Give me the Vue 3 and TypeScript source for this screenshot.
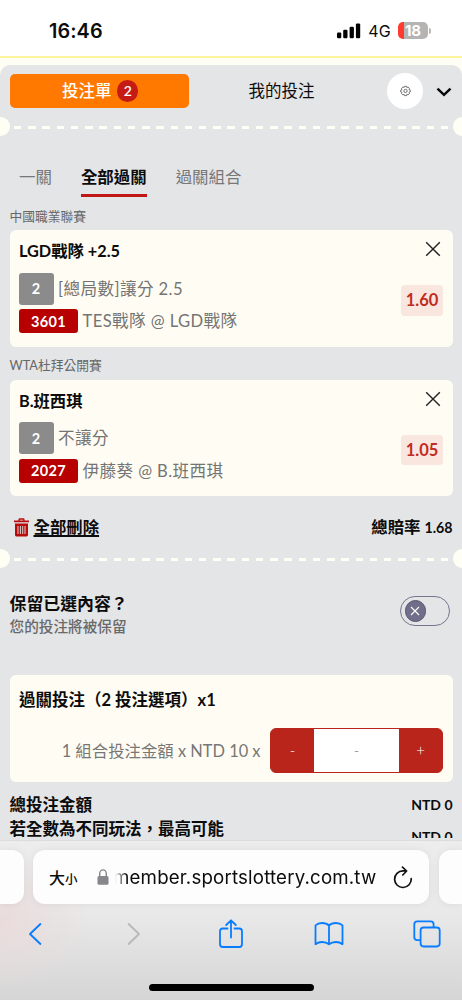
<script setup lang="ts">
interface Bet {
  league: string
  title: string
  level: string
  market: string
  code: string
  match: string
  odds: string
}

const bets: Bet[] = [
  { league: '中國職業聯賽', title: 'LGD戰隊 +2.5', level: '2', market: '[總局數]讓分 2.5', code: '3601', match: 'TES戰隊 @ LGD戰隊', odds: '1.60' },
  { league: 'WTA杜拜公開賽', title: 'B.班西琪', level: '2', market: '不讓分', code: '2027', match: '伊藤葵 @ B.班西琪', odds: '1.05' },
]
</script>

<template>
  <div class="phone">
    <header class="status">
      <span class="time">16:46</span>
      <div class="signals">
        <svg class="bars" width="24" height="16" viewBox="0 0 24 16">
          <rect x="0" y="9.5" width="4.3" height="5.7" rx="1.2" />
          <rect x="6.2" y="6.8" width="4.3" height="8.4" rx="1.2" />
          <rect x="12.6" y="3.7" width="4.3" height="11.5" rx="1.2" />
          <rect x="18.9" y="0.4" width="4.3" height="14.8" rx="1.2" />
        </svg>
        <span class="net">4G</span>
        <div class="battery"><span>18</span></div>
        <i class="cap"></i>
      </div>
    </header>
    <div class="strip"></div>

    <main class="slip">
      <div class="top">
        <button class="active">投注單<span class="count">2</span></button>
        <span class="mine">我的投注</span>
        <span class="gear">
          <svg width="13" height="13" viewBox="0 0 12 12" fill="none" stroke="#555" stroke-width=".75" stroke-linejoin="round">
            <path d="M5.1 1.200h1.800l.35 1.150 1.100-.5 1.300 1.250-.5 1.100 1.250.45v1.700l-1.250.45.5 1.100-1.300 1.250-1.100-.5-.35 1.150H5.100l-.4-1.150-1.100.5-1.300-1.250.5-1.100-1.200-.45v-1.700l1.200-.45-.5-1.100 1.300-1.250 1.100.5z" />
            <circle cx="6" cy="5.500" r="1.500" />
          </svg>
        </span>
        <svg class="chev" width="16" height="10" viewBox="0 0 16 10" fill="none" stroke="#0b0b0b" stroke-width="2.500"><path d="M1.500 1.600 8 7.800l6.500-6.200" /></svg>
      </div>
      <div class="perforation"><i></i><b></b><i></i></div>

      <nav class="tabs">
        <span>一關</span><span class="on">全部過關</span><span>過關組合</span>
      </nav>

      <section v-for="bet in bets" :key="bet.code" class="bet">
        <div class="league">{{ bet.league }}</div>
        <div class="card">
          <div class="info">
            <div class="title">{{ bet.title }}</div>
            <div class="line market"><span class="level">{{ bet.level }}</span><span class="words">{{ bet.market }}</span></div>
            <div class="line match"><span class="code">{{ bet.code }}</span><span class="words">{{ bet.match }}</span></div>
          </div>
          <div class="side">
            <svg width="16" height="16" viewBox="0 0 16 16" fill="none" stroke="#222" stroke-width="1.400"><path d="m1.200 1.200 13.600 13.600M14.800 1.200 1.200 14.800" /></svg>
            <span class="odds">{{ bet.odds }}</span>
          </div>
        </div>
      </section>

      <div class="summary">
        <svg width="15" height="19" viewBox="0 0 15 19" fill="#b80c0c">
          <path d="M0 2.500h4.400V1.700Q4.400.3 5.800.3h3.400q1.400 0 1.400 1.400v.8H15v1.800H0zm5.800 0h3.400v-.8H5.800zM1 5.500h13V17q0 1.400-1.400 1.400H2.400Q1 18.400 1 17z" fill-rule="evenodd" />
          <path d="M4 8v8M6.400 8v8M8.700 8v8M11 8v8" stroke="#e4e5e7" stroke-width=".9" />
        </svg>
        <span class="clear">全部刪除</span>
        <span class="total-odds">總賠率 <em>1.68</em></span>
      </div>
      <div class="perforation"><i></i><b></b><i></i></div>

      <div class="keep">
        <div>
          <div class="keep-title">保留已選內容？</div>
          <div class="keep-note">您的投注將被保留</div>
        </div>
        <div class="toggle"><span>
          <svg width="10" height="10" viewBox="0 0 10 10" stroke="#fff" stroke-width="1.100"><path d="m1 1 8 8M9 1 1 9" /></svg>
        </span></div>
      </div>

      <div class="stake">
        <div class="stake-title">過關投注（2 投注選項）x1</div>
        <div class="stake-row">
          <span class="stake-label">1 組合投注金額 x NTD 10 x</span>
          <div class="stepper"><span>-</span><span class="value">-</span><span>+</span></div>
        </div>
      </div>

      <div class="totals">
        <div><span>總投注金額</span><span class="money">NTD 0</span></div>
        <div><span>若全數為不同玩法，最高可能</span><span class="money late">NTD 0</span></div>
      </div>
    </main>

    <footer class="browser">
      <div class="urls">
        <div class="tab left"></div>
        <div class="address">
          <span class="size">大<small>小</small></span>
          <svg class="lock" width="12" height="16" viewBox="0 0 12 16"><path d="M2.700 8V4.500a3.300 3.600 0 0 1 6.600 0V8" fill="none" stroke="#86868b" stroke-width="1.400" /><rect x=".5" y="7" width="11" height="8.700" rx="1.500" fill="#86868b" /></svg>
          <span class="url">member.sportslottery.com.tw</span>
          <svg class="reload" width="20" height="23" viewBox="0 0 20 23" fill="none" stroke="#111" stroke-width="1.700" stroke-linecap="round" stroke-linejoin="round"><path d="M18.200 12.700A8.300 8.300 0 1 1 9.900 4.900h3.500M9.500 1.200l4.100 3.800-3.800 4" /></svg>
        </div>
        <div class="tab right"></div>
      </div>
      <div class="tools">
        <svg width="14" height="24" viewBox="0 0 14 24"><path d="M12.400 2 2 12l10.400 10" /></svg>
        <svg class="off" width="14" height="24" viewBox="0 0 14 24"><path d="m1.600 2 10.400 10L1.600 22" /></svg>
        <svg width="26" height="32" viewBox="0 0 26 32"><path d="M9.500 10.500H4.700Q2 10.500 2 13.200v13.100Q2 29 4.700 29h16.600q2.700 0 2.700-2.700V13.200q0-2.700-2.700-2.700h-4.800M13 19.500V2.500M8.200 7 13 2.300 17.800 7" /></svg>
        <svg width="30" height="26" viewBox="0 0 30 26"><path d="M15 4.500Q12.500 2 8 2 4 2 1.500 4.300V23.200Q4.500 21 8 21q4.500 0 7 2.300 2.500-2.300 7-2.300 3.500 0 6.500 2.200V4.300Q26 2 22 2q-4.500 0-7 2.500zV23.300" /></svg>
        <svg width="28" height="28" viewBox="0 0 28 28"><path d="M7.500 20.200H4.200q-2.900 0-2.900-2.900V4.200q0-2.900 2.900-2.900h13.500q2.900 0 2.900 2.900v3.200M10.500 7.500h13.300q2.900 0 2.900 2.900v13.200q0 2.900-2.900 2.900H10.500q-2.900 0-2.900-2.900V10.400q0-2.900 2.900-2.900z" /></svg>
      </div>
      <div class="home"></div>
    </footer>
  </div>
</template>

<style>
body { margin: 0; background: #fffef5; }
</style>

<style scoped>
* { box-sizing: border-box; }
.phone { width: 462px; height: 1000px; overflow: hidden; background: #fffef5; display: flex; flex-direction: column; font-family: Lato, "Noto Sans CJK TC", sans-serif; color: #0c0c0c; white-space: nowrap; }
.status { height: 56px; flex: none; background: #fff; display: flex; justify-content: space-between; padding: 0 31px 0 49px; font-family: Inter, sans-serif; }
.time { font-size: 19.800px; line-height: 24px; padding-top: 19px; font-weight: 600; letter-spacing: .1px; }
.signals { display: flex; align-items: center; height: 24px; margin-top: 18.500px; }
.net { font-size: 16px; margin: 0 7px 0 7px; letter-spacing: .2px; }
.battery { width: 30px; height: 17px; border-radius: 5px; background: linear-gradient(90deg, #ff3b30 6px, #b4b4b4 6px); color: #fff; font-size: 15px; font-weight: 700; line-height: 17px; text-align: center; }
.cap { width: 2px; height: 6px; border-radius: 0 3px 3px 0; background: #b9b9b9; margin-left: 1px; }
.strip { height: 9px; flex: none; border-top: 2px solid #fff49b; }
.slip { height: 775px; flex: none; overflow: hidden; background: #e4e5e7; border-radius: 10px 10px 0 0; }
.top { height: 52px; padding: 9px 10px 0 9.500px; display: flex; align-items: flex-start; }
.active { width: 179.500px; height: 34px; border: 0; border-radius: 5px; background: #ff7900; color: #fff; font: 500 16.500px/34px Lato, "Noto Sans CJK TC", sans-serif; padding: 0 0 0 2px; display: flex; align-items: center; justify-content: center; gap: 5.500px; }
.count { width: 21.400px; height: 21.400px; border-radius: 50%; background: #c51b14; font: 600 14px/21.400px Lato, sans-serif; text-align: center; }
.mine { font-size: 16.500px; line-height: 34px; margin-left: 59.500px; width: 138.500px; }
.gear { width: 36px; height: 36px; margin-top: -1px; border-radius: 50%; background: #fff; display: grid; place-items: center; }
.gear svg { margin-top: 1px; }
.chev { margin: 13px 0 0 13px; }
.perforation { height: 19px; display: flex; align-items: center; overflow: hidden; }
.perforation i { width: 19px; height: 19px; border-radius: 50%; background: #fffef5; margin: 0 -9.500px; flex: none; }
.perforation b { flex: 1; height: 2.500px; margin: 2px 14px 0; background: repeating-linear-gradient(90deg, #fffef5 0 7.500px, transparent 7.500px 14.230px); }
.tabs { height: 61.500px; display: flex; gap: 29px; padding: 26px 19px 0; font-size: 16.450px; line-height: 30px; color: #777; }
.tabs span { height: 34.500px; }
.tabs .on { color: #0c0c0c; font-weight: 700; border-bottom: 3.500px solid #c01616; }
.bet { padding: 0 9.500px; height: 149.700px; }
.league { height: 32.500px; padding-top: 8px; font-size: 12.750px; line-height: 20px; color: #676767; }
.card { height: 116.500px; border-radius: 6px; background: #fffdf3; padding: 9px 9.500px 0; display: flex; justify-content: space-between; }
.title { font-size: 16.300px; font-weight: 700; line-height: 24px; height: 33.500px; }
.line { display: flex; align-items: center; font-size: 16.600px; letter-spacing: .4px; color: #747474; }
.words { margin-top: -1.500px; }
.market { height: 32px; gap: 4.500px; }
.match { height: 24px; margin-top: 4.500px; gap: 4.500px; }
.level, .code { display: grid; place-items: center; border-radius: 3px; color: #fff; font-size: 14.500px; font-weight: 700; }
.level { width: 34.500px; height: 32px; background: #8b8b8b; }
.code { width: 59px; height: 24px; background: #b70000; }
.side { display: flex; flex-direction: column; align-items: flex-end; }
.side svg { margin: 2px 2px 0 0; }
.odds { width: 42px; height: 30.500px; margin-top: 28px; border-radius: 4px; background: #f8e6df; color: #c22b20; font-size: 16.500px; font-weight: 700; line-height: 30px; text-align: center; }
.summary { height: 52.100px; padding: 18.500px 9.500px 0 14px; display: flex; align-items: flex-start; font-size: 16.400px; font-weight: 700; line-height: 24px; }
.summary svg { margin: 2.500px 4.500px 0 0; }
.clear { text-decoration: underline; text-decoration-thickness: 1.500px; text-underline-offset: 2px; }
.total-odds { margin-left: auto; }
.total-odds em { font-style: normal; font-size: 14.200px; }
.keep { height: 107px; padding: 24.500px 12.500px 0 9.500px; display: flex; justify-content: space-between; }
.keep-title { font-size: 16.900px; font-weight: 700; line-height: 24px; }
.keep-note { font-size: 14.650px; line-height: 21px; color: #696969; font-weight: 500; }
.toggle { width: 49.500px; height: 30.500px; margin-top: 3.500px; padding: 3px; border: 1.500px solid #77748e; border-radius: 16px; }
.toggle span { width: 21.500px; height: 21.500px; margin: .5px 0 0 .5px; border-radius: 50%; border: 1.500px solid #55536e; background: #706e88; display: grid; place-items: center; }
.stake { height: 107px; margin: 0 9.500px; padding: 13px 9.500px 0; border-radius: 6px; background: #fffdf3; }
.stake-title { font-size: 16.500px; font-weight: 700; line-height: 24px; height: 40px; }
.stake-row { display: flex; justify-content: flex-end; align-items: center; }
.stake-label { font-size: 16.400px; color: #777; margin-right: 9.500px; }
.stepper { width: 173px; height: 45px; border: 1px solid #b9251b; border-radius: 6px; background: #b9251b; color: #fff; display: grid; grid-template-columns: 43px 85px 43px; font-size: 15px; line-height: 43px; text-align: center; overflow: hidden; font-weight: 300; }
.value { background: #fff; color: #777; }
.totals { padding: 11px 9.500px 0; font-size: 16.500px; font-weight: 700; line-height: 24px; }
.totals div { display: flex; justify-content: space-between; }
.money { font-size: 14px; }
.late { height: 21px; padding-top: 8px; overflow: hidden; }
.browser { height: 160px; flex: none; border-top: 1px solid #dcdcdd; background: radial-gradient(ellipse 90px 70px at 0 80px, #eadbdb, transparent), linear-gradient(#ededee, #e9e9e9 45%, #d5d5d5); }
.urls { height: 64px; padding-top: 9px; display: flex; gap: 9.500px; }
.tab, .address { height: 54px; background: #fdfdfd; box-shadow: 0 0 8px #00000010; }
.left { width: 23.500px; border-radius: 0 12px 12px 0; }
.right { flex: 1; border-radius: 12px 0 0 12px; }
.address { width: 396px; border-radius: 12px; display: flex; align-items: center; padding: 0 16px; font-family: Inter, "Noto Sans CJK TC", sans-serif; }
.size { font-size: 16px; font-weight: 500; width: 48px; }
.size small { font-size: 12.500px; }
.url { font-size: 18.700px; margin-left: 4px; width: 264px; letter-spacing: .17px; mask-image: linear-gradient(90deg, transparent 2px, #000 14px); -webkit-mask-image: linear-gradient(90deg, transparent 2px, #000 14px); }
.reload { margin-left: auto; }
.tools { height: 57px; margin-left: -14.500px; width: 490px; display: grid; grid-template-columns: repeat(5, 98px); justify-items: center; align-items: center; }
.tools svg { fill: none; stroke: #087cff; stroke-width: 1.800; stroke-linecap: round; stroke-linejoin: round; }
.tools .off { stroke: #b8b8ba; margin-left: 3px; }
.home { width: 165px; height: 6.500px; border-radius: 4px; background: #000; margin: 22px auto 0 149px; }
</style>
